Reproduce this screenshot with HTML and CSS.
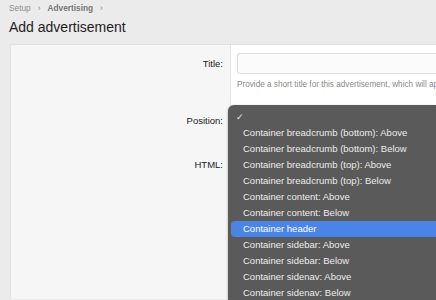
FILE: index.html
```html
<!DOCTYPE html>
<html lang="en">
<head>
    <meta charset="UTF-8">
    <title>Add advertisement</title>
    <link rel="stylesheet" href="styles.css">
</head>
<body>
    <div class="crumbs">
        <span>Setup</span><span class="sep">&rsaquo;</span><b>Advertising</b><span class="sep">&rsaquo;</span>
    </div>
    <h1>Add advertisement</h1>
    <div class="panel">
        <div class="row row-title">
            <label class="label">Title:</label>
            <div class="field">
                <input type="text" class="input">
                <p class="hint">Provide a short title for this advertisement, which will appear in the list.</p>
            </div>
        </div>
        <div class="row row-pos">
            <label class="label">Position:</label>
            <div class="field"></div>
        </div>
        <div class="row row-html">
            <label class="label">HTML:</label>
            <div class="field"></div>
        </div>
    </div>
    <ul class="menu">
        <li class="check">&#10003;</li>
        <li>Container breadcrumb (bottom): Above</li>
        <li>Container breadcrumb (bottom): Below</li>
        <li>Container breadcrumb (top): Above</li>
        <li>Container breadcrumb (top): Below</li>
        <li>Container content: Above</li>
        <li>Container content: Below</li>
        <li class="active">Container header</li>
        <li>Container sidebar: Above</li>
        <li>Container sidebar: Below</li>
        <li>Container sidenav: Above</li>
        <li>Container sidenav: Below</li>
    </ul>
</body>
</html>
```

FILE: styles.css
```css
html,body{
    height:100%;
}
body{
    margin:0;
    background:#ebebeb;
    font-family:"Liberation Sans",Arial,sans-serif;
    color:#222;
    overflow:hidden;
}
.crumbs{
    padding:3px 9px 0;
    font-size:8.3px;
    line-height:10px;
    color:#8c8c8c;
}
.crumbs b{
    color:#777;
}
.crumbs .sep{
    margin:0 7px;
}
h1{
    margin:5px 9px 8px;
    font-size:14px;
    font-weight:normal;
    line-height:18px;
    color:#1e1e1e;
}
.panel{
    margin-left:10px;
    background:#fff;
    border-left:1px solid #e2e2e2;
    border-top:1px solid #e2e2e2;
    height:254px;
    overflow:hidden;
}
.row{
    display:flex;
}
.label{
    width:212px;
    flex:none;
    padding-right:7px;
    background:#f6f6f6;
    border-right:1px solid #e6e6e6;
    text-align:right;
    font-size:9.5px;
    color:#222;
}
.field{
    flex:1;
    min-width:0;
    padding-left:6px;
    overflow:hidden;
}
.row-title .label{
    padding-top:13px;
    height:44px;
}
.row-title .field{
    padding-top:8px;
}
.input{
    display:block;
    width:100%;
    height:21px;
    box-sizing:border-box;
    margin:0;
    border:1px solid #ddd;
    border-right:0;
    border-radius:3px 0 0 3px;
    background:#fbfbfb;
}
.hint{
    margin:6px 0 0;
    font-size:8.2px;
    white-space:nowrap;
    color:#8a8a8a;
}
.row-pos .label{
    padding-top:13px;
    height:31px;
}
.row-html .label{
    padding-top:13px;
    height:200px;
}
.menu{
    position:absolute;
    left:228px;
    top:105px;
    right:0;
    bottom:0;
    margin:0;
    padding:4px 0 0;
    list-style:none;
    background:#5a5a5a;
    border-radius:6px 0 0 0;
    box-shadow:-1px 0 2px rgba(0,0,0,.15);
    overflow:hidden;
}
.menu li{
    height:16px;
    line-height:16px;
    padding-left:12px;
    margin-left:3px;
    font-size:9.5px;
    color:#ececec;
    white-space:nowrap;
}
.menu .check{
    padding-left:5px;
    font-size:9px;
}
.menu .active{
    background:#4a84e6;
    border-radius:4px 0 0 4px;
    color:#fff;
}
```
